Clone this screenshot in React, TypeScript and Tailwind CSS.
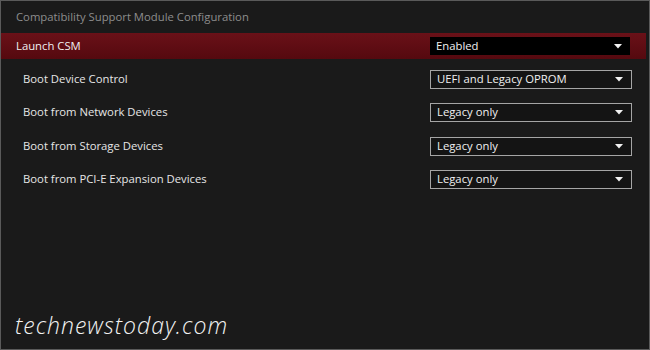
const rows = [
  { label: "Boot Device Control", value: "UEFI and Legacy OPROM" },
  { label: "Boot from Network Devices", value: "Legacy only" },
  { label: "Boot from Storage Devices", value: "Legacy only" },
  { label: "Boot from PCI-E Expansion Devices", value: "Legacy only" },
];

const Caret = () => (
  <svg width="8" height="5" viewBox="0 0 8 5" className="shrink-0">
    <path d="M0 0 L8 0 L4 4.5 Z" fill="#f2f2f2" />
  </svg>
);

const App = () => {
  return (
    <div
      className="w-[650px] h-[350px] bg-[#1a1a1a] border border-[#5a5a5a] flex flex-col text-[11.3px] overflow-hidden"
      style={{ fontFamily: '"Open Sans", "Noto Sans", sans-serif' }}
    >
      {/* Header */}
      <div className="h-[32px] flex items-center pl-[15px] text-[#8d8d8d]">
        Compatibility Support Module Configuration
      </div>

      {/* Selected row */}
      <div className="h-[26px] mr-[3px] flex items-center justify-between pl-[15px] pr-[16px] bg-[linear-gradient(to_bottom,#6a1118,#55090f)]">
        <span className="text-[#f0f0f0]">Launch CSM</span>
        <div className="w-[200px] h-[18px] bg-black flex items-center justify-between pl-[6px] pr-[8px] text-[#f0f0f0]">
          <span>Enabled</span>
          <Caret />
        </div>
      </div>

      {/* Settings */}
      <div className="flex flex-col gap-[7.4px] mt-[7.5px]">
        {rows.map((r) => (
          <div key={r.label} className="h-[26px] flex items-center justify-between pl-[22px] pr-[17px]">
            <span className="text-[#e6e6e6]">{r.label}</span>
            <div className="w-[202px] h-[19px] border border-[#a5a5a5] bg-[#141414] flex items-center justify-between pl-[6px] pr-[8px] text-[#f0f0f0]">
              <span>{r.value}</span>
              <Caret />
            </div>
          </div>
        ))}
      </div>

      {/* Watermark */}
      <div className="mt-auto mb-[7px] pl-[14px] text-[#f2f2f2] text-[23px] italic font-light tracking-[1px]">
        technewstoday.com
      </div>
    </div>
  );
};

export default App;
